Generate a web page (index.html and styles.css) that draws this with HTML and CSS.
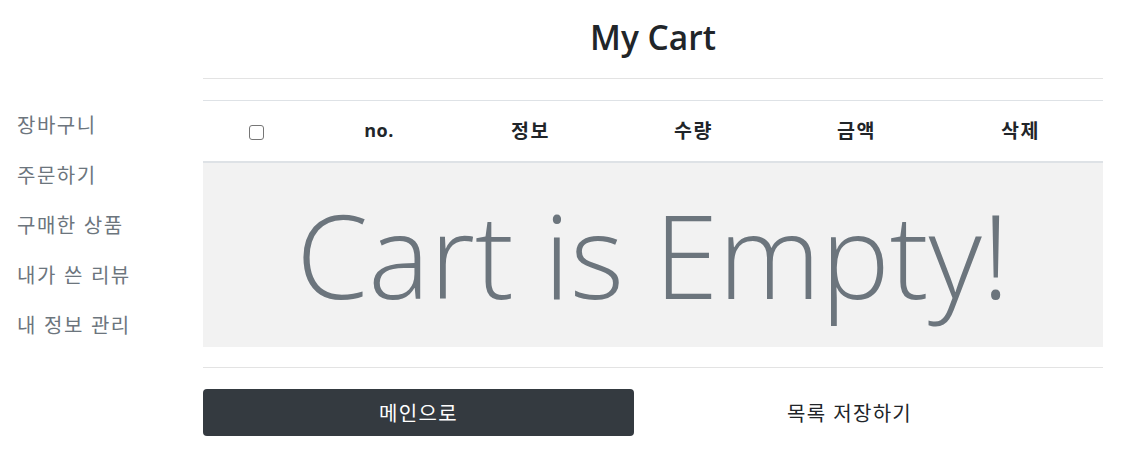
FILE: index.html
```html
<!DOCTYPE html>
<html lang="ko">
<head>
<meta charset="utf-8">
<title>My Cart</title>
<link rel="stylesheet" href="styles.css">
</head>
<body>
<div class="page">
  <nav class="sidebar">
    <a class="side-link" href="#">장바구니</a>
    <a class="side-link" href="#">주문하기</a>
    <a class="side-link" href="#">구매한 상품</a>
    <a class="side-link" href="#">내가 쓴 리뷰</a>
    <a class="side-link" href="#">내 정보 관리</a>
  </nav>
  <main class="main">
    <header class="title-bar">
      <h2 class="title">My Cart</h2>
    </header>
    <section class="cart-table">
      <div class="thead">
        <div class="th"><input type="checkbox" class="check"></div>
        <div class="th th-latin">no.</div>
        <div class="th">정보</div>
        <div class="th">수량</div>
        <div class="th">금액</div>
        <div class="th">삭제</div>
      </div>
      <div class="empty">Cart is Empty!</div>
    </section>
    <div class="actions">
      <button class="btn btn-dark" type="button">메인으로</button>
      <button class="btn btn-plain" type="button">목록 저장하기</button>
    </div>
  </main>
</div>
</body>
</html>
```

FILE: styles.css
```css
* { box-sizing: border-box; }
html, body { margin: 0; padding: 0; background: #fff; }
body {
  font-family: "Open Sans", "Noto Sans CJK KR", sans-serif;
  color: #212529;
}
.page {
  display: flex;
  width: 1143px;
  height: 471px;
}
.sidebar {
  width: 203px;
  flex: none;
  display: flex;
  flex-direction: column;
  padding: 100px 0 0 17px;
}
.side-link {
  display: block;
  height: 50px;
  line-height: 50px;
  font-family: "Noto Sans CJK KR", sans-serif;
  font-size: 20px;
  letter-spacing: 1.5px;
  color: #6c757d;
  text-decoration: none;
}
.main {
  width: 900px;
  flex: none;
  display: flex;
  flex-direction: column;
}
.title-bar {
  height: 79px;
  border-bottom: 1px solid #e3e3e3;
  display: flex;
  align-items: center;
  justify-content: center;
  padding-bottom: 3px;
}
.title {
  margin: 0;
  font-family: "Open Sans", sans-serif;
  font-weight: 600;
  font-size: 33.5px;
  line-height: 1.2;
  color: #212529;
}
.cart-table {
  margin-top: 21px;
  border-top: 1px solid #dee2e6;
}
.thead {
  display: grid;
  grid-template-columns: 106px 140px 163px 163px 163px 165px;
  height: 62px;
  border-bottom: 2px solid #dee2e6;
  align-items: center;
}
.th {
  text-align: center;
  font-family: "Noto Sans CJK KR", sans-serif;
  font-weight: 700;
  font-size: 19.5px;
  letter-spacing: 1.5px;
  line-height: 1;
  padding-bottom: 3px;
}
.th-latin {
  font-family: "Open Sans", sans-serif;
  font-size: 18px;
  letter-spacing: 0.5px;
  padding-bottom: 2px;
}
.check {
  appearance: none;
  -webkit-appearance: none;
  display: inline-block;
  width: 15px;
  height: 15px;
  margin: 0;
  border: 1px solid #767676;
  border-radius: 3px;
  background: #fff;
  vertical-align: middle;
}
.empty {
  height: 184px;
  background: #f2f2f2;
  color: #6c757d;
  font-family: "Open Sans", sans-serif;
  font-weight: 300;
  font-size: 116px;
  line-height: 183px;
  text-align: center;
  white-space: nowrap;
  overflow: hidden;
}
.actions {
  margin-top: 20px;
  border-top: 1px solid #e3e3e3;
  padding-top: 21px;
  display: flex;
}
.btn {
  width: 431px;
  height: 47px;
  border: 0;
  border-radius: 4px;
  font-family: "Noto Sans CJK KR", sans-serif;
  font-size: 20px;
  letter-spacing: 1.3px;
  line-height: 1;
  cursor: pointer;
}
.btn-dark {
  background: #343a40;
  color: #fff;
}
.btn-plain {
  background: transparent;
  color: #212529;
}
```
